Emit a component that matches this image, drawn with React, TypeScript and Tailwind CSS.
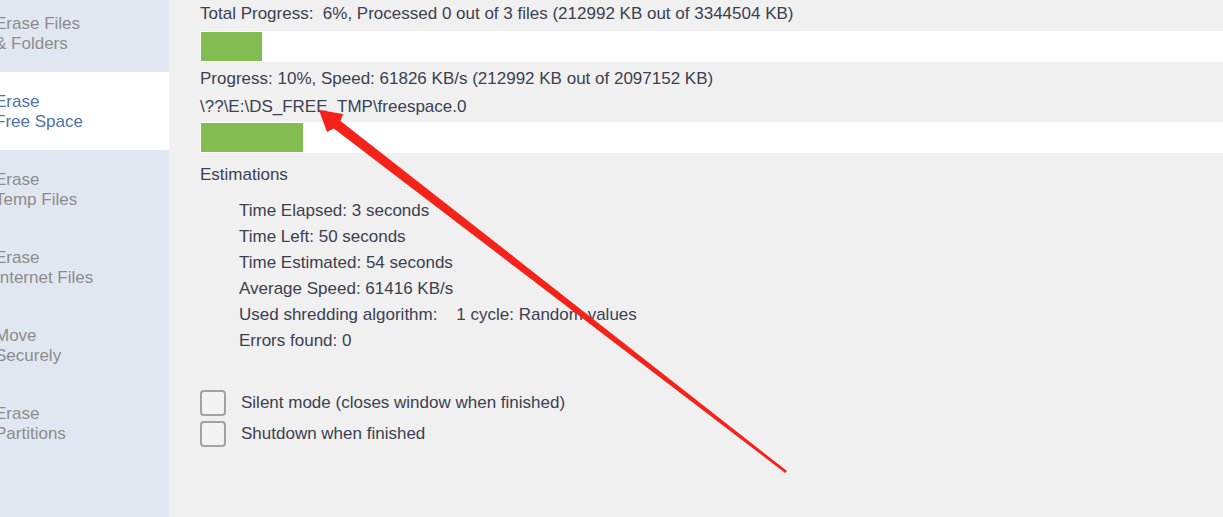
import React from 'react';

const navItems = [
  ['Erase Files', '& Folders'],
  ['Erase', 'Free Space'],
  ['Erase', 'Temp Files'],
  ['Erase', 'Internet Files'],
  ['Move', 'Securely'],
  ['Erase', 'Partitions'],
];

const estimations = [
  'Time Elapsed: 3 seconds',
  'Time Left: 50 seconds',
  'Time Estimated: 54 seconds',
  'Average Speed: 61416 KB/s',
  'Used shredding algorithm:    1 cycle: Random values',
  'Errors found: 0',
];

const ProgressBar = ({ fill }: { fill: number }) => (
  <div className="h-[31px] bg-white p-px">
    <div className="h-full bg-[#83bd51]" style={{ width: fill }} />
  </div>
);

const Checkbox = ({ label }: { label: string }) => (
  <label className="flex items-center h-[26px]">
    <span className="w-[26px] h-[26px] rounded-[4px] border-2 border-[#a2a2a2] bg-[#f3f3f3]" />
    <span className="ml-[15px]">{label}</span>
  </label>
);

const App = () => {
  return (
    <div
      className="relative flex w-full h-[517px] overflow-hidden bg-[#f0f0f0] text-[17px] leading-[20px] text-[#3c4050]"
      style={{ fontFamily: '"Liberation Sans", Arial, sans-serif' }}
    >
      {/* sidebar, labels run off the left edge */}
      <aside className="w-[169px] shrink-0 bg-[#e1e7f1]">
        <div className="-mt-[6px]">
          {navItems.map(([a, b], i) => (
            <div
              key={i}
              className={
                'h-[78px] pt-[2px] flex flex-col justify-center ' +
                (i === 1 ? 'bg-white text-[#4f73aa]' : 'text-[#8c8c8c]')
              }
            >
              <span className="-ml-[5px]">{a}</span>
              <span className="-ml-[5px]">{b}</span>
            </div>
          ))}
        </div>
      </aside>

      <main className="flex-1 pl-[31px] pt-[4px]">
        <div className="whitespace-pre">Total Progress:  6%, Processed 0 out of 3 files (212992 KB out of 3344504 KB)</div>
        <div className="mt-[7px]">
          <ProgressBar fill={61} />
        </div>
        <div className="mt-[7px]">Progress: 10%, Speed: 61826 KB/s (212992 KB out of 2097152 KB)</div>
        <div className="mt-[8px]">\??\E:\DS_FREE_TMP\freespace.0</div>
        <div className="mt-[5px]">
          <ProgressBar fill={102} />
        </div>
        <div className="mt-[12px]">Estimations</div>
        <div className="mt-[13px] pl-[39px] leading-[26px]">
          {estimations.map((t) => (
            <div key={t} className="whitespace-pre">{t}</div>
          ))}
        </div>
        <div className="mt-[36px] flex flex-col gap-[5px]">
          <Checkbox label="Silent mode (closes window when finished)" />
          <Checkbox label="Shutdown when finished" />
        </div>
      </main>

      {/* annotation arrow */}
      <svg className="absolute left-0 top-0 pointer-events-none" width="1223" height="517">
        <polygon
          fill="#f5221a"
          points="319,110 343,114 340.5,121 787,471 785.2,473 333.8,128.5 327,132"
        />
      </svg>
    </div>
  );
};

export default App;
